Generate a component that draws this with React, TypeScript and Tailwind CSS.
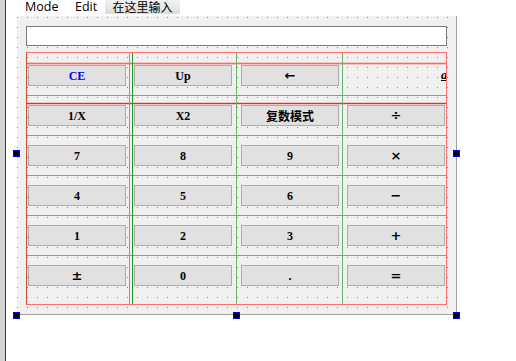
import React from 'react';

type Key = { label: string; blue?: boolean; cjk?: boolean; op?: boolean } | null;

const rows: Key[][] = [
  [{ label: 'CE', blue: true }, { label: 'Up' }, { label: '←', op: true }, null],
  [{ label: '1/X' }, { label: 'X2' }, { label: '复数模式', cjk: true }, { label: '÷', op: true }],
  [{ label: '7' }, { label: '8' }, { label: '9' }, { label: '×', op: true }],
  [{ label: '4' }, { label: '5' }, { label: '6' }, { label: '−', op: true }],
  [{ label: '1' }, { label: '2' }, { label: '3' }, { label: '+', op: true }],
  [{ label: '±', op: true }, { label: '0' }, { label: '.' }, { label: '=', op: true }],
];

// left margin of each column inside the layout box
const colGap = ['ml-[1px]', 'ml-[8px]', 'ml-[9px]', 'ml-[8px]'];

function KeyButton({ k }: { k: Key }) {
  if (!k) return <div className="w-[98px] h-[21px]" />;
  let font = "font-['Liberation_Serif','DejaVu_Serif',serif] text-[12px]";
  if (k.cjk) font = "font-['Noto_Sans_CJK_SC',sans-serif] text-[12px]";
  if (k.op) font = "font-['DejaVu_Sans',sans-serif] text-[13px]";
  return (
    <div
      className={
        'w-[98px] h-[21px] bg-[#e1e1e1] border border-[#adadad] flex items-center justify-center font-bold leading-none ' +
        (k.blue ? 'text-[#0000ff] ' : 'text-black ') +
        font
      }
    >
      {k.label}
    </div>
  );
}

function Handle({ className }: { className: string }) {
  return (
    <div className={'absolute w-[7px] h-[7px] bg-[#0000ff] p-px ' + className}>
      <div className="w-full h-full bg-black" />
    </div>
  );
}

export default function App() {
  return (
    <div className="relative w-[516px] h-[361px] bg-white overflow-hidden flex font-['Open_Sans',sans-serif]">
      {/* side strip */}
      <div className="w-[5px] h-full bg-[#d4d4d4]" />
      <div className="w-px h-full bg-[#3c3c3c]" />
      <div className="w-[11px]" />

      <div className="flex flex-col w-[440px]">
        {/* menu bar */}
        <div className="h-4 flex items-start text-[12.5px] text-black leading-[14px]">
          <div className="w-[58px] pl-2">Mode</div>
          <div className="w-[30px]">Edit</div>
          <div className="w-[75px] h-[14px] bg-[linear-gradient(#f2f2f2,#dcdcdc)] flex justify-center font-['Noto_Sans_CJK_SC',sans-serif] text-[12px] leading-[14px]">
            在这里输入
          </div>
        </div>

        {/* form */}
        <div className="relative h-[299px] bg-[#f0f0f0] border-r border-b border-[#a0a0a0]">
          <svg className="absolute inset-0 w-full h-full" aria-hidden>
            <defs>
              <pattern id="dots" width="10" height="10" patternUnits="userSpaceOnUse">
                <rect x="0" y="1" width="1" height="1" fill="#8e8e8e" />
              </pattern>
            </defs>
            <rect width="100%" height="100%" fill="url(#dots)" />
          </svg>

          <div className="relative pl-[9px] pt-[10px]">
            <div className="w-[421px] h-5 bg-white border border-[#7a7a7a]" />

            {/* grid layout */}
            <div className="relative mt-[6px] w-[421px] h-[253px] border border-[#ff7070] border-l-[#c8502a] overflow-hidden">
              {/* row markers */}
              <div className="absolute left-0 right-0 top-[9px] h-[3px] border border-[#f4c4c4]" />
              <div className="absolute left-0 right-0 top-[49px] h-[3px] border border-[#f4c4c4]" />
              {[10, 42, 82, 122, 162, 202].map((t) => (
                <div key={t} className="absolute left-0 right-0 h-px bg-[#6cb46c]" style={{ top: t }} />
              ))}
              <div className="absolute left-0 right-0 top-[50px] h-px bg-[#2d8a2d]" />
              <div className="absolute top-0 bottom-0 left-[102px] w-px bg-[#6cb46c]" />
              <div className="absolute top-0 bottom-0 left-[105px] w-px bg-[#229922]" />
              <div className="absolute top-0 bottom-0 left-[209px] w-px bg-[#6cb46c]" />
              <div className="absolute top-0 bottom-0 left-[315px] w-px bg-[#6cb46c]" />

              <div className="relative flex flex-col pt-[12px] gap-[19px]">
                {rows.map((row, i) => (
                  <div key={i} className="flex">
                    {row.map((k, j) => (
                      <div key={j} className={colGap[j]}>
                        <KeyButton k={k} />
                      </div>
                    ))}
                  </div>
                ))}
              </div>

              <span className="absolute left-[414px] top-[12px] text-[13px] italic font-bold underline font-['Liberation_Serif',serif] text-black">
                a
              </span>
            </div>
          </div>
        </div>
      </div>

      {/* selection handles */}
      <Handle className="left-[13px] top-[150px]" />
      <Handle className="left-[453px] top-[150px]" />
      <Handle className="left-[13px] top-[312px]" />
      <Handle className="left-[233px] top-[312px]" />
      <Handle className="left-[453px] top-[312px]" />
    </div>
  );
}
